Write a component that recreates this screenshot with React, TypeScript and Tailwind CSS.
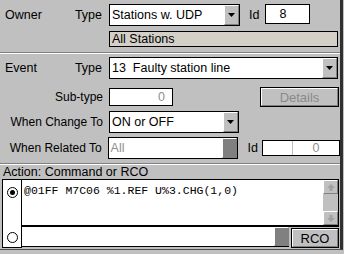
import React from "react";

const raised =
  "border border-t-white border-l-white border-r-[#808080] border-b-[#808080]";

function DropBtn({ dark = false }: { dark?: boolean }) {
  if (dark) {
    return <div className={`w-[15px] h-full bg-[#808080] ${raised}`} />;
  }
  return (
    <div className={`w-[15px] h-full bg-[#c0c0c0] ${raised} flex items-center justify-center`}>
      <svg width="7" height="4" viewBox="0 0 7 4">
        <path d="M0 0h7L3.5 4z" fill="#000" />
      </svg>
    </div>
  );
}

function Select({
  value,
  width,
  disabled = false,
}: {
  value: string;
  width: string;
  disabled?: boolean;
}) {
  return (
    <div className={`flex h-[22px] ${width} border border-black bg-white`}>
      <div
        className={`flex-1 flex items-center pl-[2px] whitespace-pre text-[12.5px] ${
          disabled ? "text-[#909090]" : "text-black"
        }`}
      >
        {value}
      </div>
      <DropBtn dark={disabled} />
    </div>
  );
}

function Button({ label, disabled = false, className }: { label: string; disabled?: boolean; className: string }) {
  return (
    <div className={`border border-black ${className}`}>
      <div
        className={`h-full w-full ${raised} bg-[#c0c0c0] flex items-center justify-center text-[13px] ${
          disabled ? "text-[#8a8a8a]" : "text-black"
        }`}
      >
        {label}
      </div>
    </div>
  );
}

function ScrollArrow({ up }: { up: boolean }) {
  return (
    <div className={`h-[14px] w-full bg-[#c0c0c0] ${raised} flex items-center justify-center`}>
      <svg width="8" height="7" viewBox="0 0 8 7" className={up ? "" : "rotate-180"}>
        <path d="M4 0L8 4H5.5V7H2.5V4H0z" fill="#a0a0a0" />
      </svg>
    </div>
  );
}

function Separator() {
  return <div className="h-[2px] w-[340px] border-t border-t-[#808080] border-b border-b-white" />;
}

export default function App() {
  return (
    <div className="w-[344px] h-[254px] bg-[#c0c0c0] overflow-hidden text-[12px] leading-none text-black font-['Liberation_Sans',Arial,sans-serif]">
      <div className="w-[343px] h-[250px] border-r-[3px] border-r-[#303030] border-b border-b-[#505050] flex flex-col">
        {/* Owner */}
        <div className="flex items-center h-[22px] mt-[4px] pl-[5px]">
          <div className="w-[98px] flex justify-between pr-px text-[12.5px]">
            <span>Owner</span>
            <span>Type</span>
          </div>
          <div className="ml-[6px]">
            <Select value="Stations w. UDP" width="w-[131px]" />
          </div>
          <span className="ml-[9px] text-[12.5px]">Id</span>
          <div className="ml-[6px] h-[20px] w-[45px] border border-black bg-white flex items-center pl-[13px] text-[12.5px] self-start">
            8
          </div>
        </div>
        <div className="ml-[109px] mt-[5px] h-[16px] w-[229px] border border-black bg-[#d4d0c8] flex items-center pl-[2px] text-[12.5px]">
          All Stations
        </div>
        <div className="mt-[5px]">
          <Separator />
        </div>

        {/* Event */}
        <div className="flex items-center h-[22px] mt-[3px] pl-[5px]">
          <div className="w-[98px] flex justify-between pr-px text-[12.5px]">
            <span>Event</span>
            <span>Type</span>
          </div>
          <div className="ml-[6px]">
            <Select value="13  Faulty station line" width="w-[229px]" />
          </div>
        </div>

        <div className="flex items-center h-[20px] mt-[8px]">
          <div className="w-[103px] text-right">Sub-type</div>
          <div className="ml-[6px] h-[18px] w-[64px] border border-black bg-white flex items-center justify-end pr-[7px] text-[12.5px] text-[#909090]">
            0
          </div>
          <Button label="Details" disabled className="ml-[87px] h-[20px] w-[79px]" />
        </div>

        <div className="flex items-center h-[22px] mt-[4px]">
          <div className="w-[103px] text-right">When Change To</div>
          <div className="ml-[6px]">
            <Select value="ON or OFF" width="w-[130px]" />
          </div>
        </div>

        <div className="flex items-center h-[22px] mt-[4px]">
          <div className="w-[103px] text-right">When Related To</div>
          <div className="ml-[6px]">
            <Select value="All" width="w-[130px]" disabled />
          </div>
          <span className="ml-[10px] text-[12.5px]">Id</span>
          <div className="ml-[4px] h-[16px] w-[79px] border border-black bg-white flex text-[12.5px] text-[#909090]">
            <div className="w-[30px] border-r border-r-[#c0c0c0]" />
            <div className="flex-1 flex items-center justify-center">0</div>
          </div>
        </div>

        <div className="mt-[4px]">
          <Separator />
        </div>
        <div className="h-[14px] pl-[3px] flex items-center text-[12.5px]">Action: Command or RCO</div>

        {/* Action box */}
        <div className="ml-[2px] h-[69px] w-[337px] flex">
          <div className="w-[21px] h-full border border-black bg-white flex flex-col items-center">
            <div className="mt-[7px] w-[11px] h-[11px] rounded-full border border-black flex items-center justify-center">
              <div className="w-[5px] h-[5px] rounded-full bg-black" />
            </div>
            <div className="mt-[34px] w-[11px] h-[11px] rounded-full border border-black" />
          </div>
          <div className="flex-1 flex flex-col">
            <div className="h-[46px] flex border-t border-r border-black bg-white">
              <div className="flex-1 pl-[2px] pt-[5px] font-mono text-[11.5px] whitespace-pre">
                @01FF M7C06 %1.REF U%3.CHG(1,0)
              </div>
              <div className="w-[15px] flex flex-col bg-[#c0c0c0]">
                <ScrollArrow up />
                <div className="flex-1" />
                <ScrollArrow up={false} />
              </div>
            </div>
            <div className="h-[2px] bg-black" />
            <div className="flex flex-1">
              <div className="w-[267px] h-[20px] flex bg-white border-b border-black">
                <div className="flex-1" />
                <DropBtn dark />
              </div>
              <Button label="RCO" className="ml-[2px] mt-px h-[20px] w-[48px]" />
            </div>
          </div>
        </div>
      </div>
    </div>
  );
}
